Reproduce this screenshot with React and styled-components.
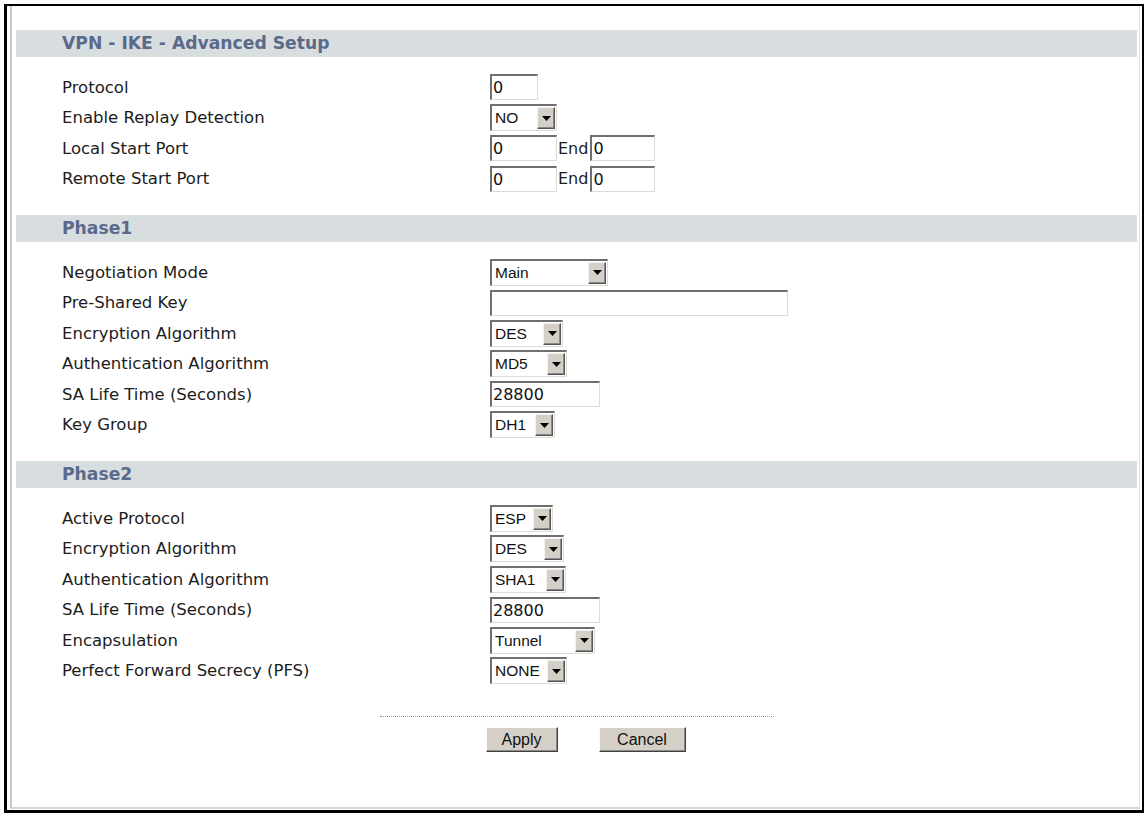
import React from "react";
import styled, { createGlobalStyle } from "styled-components";

const GlobalStyle = createGlobalStyle`
  html, body {
    margin: 0;
    padding: 0;
    background: #fff;
  }
  body {
    width: 1148px;
    height: 815px;
    overflow: hidden;
    font-family: "DejaVu Sans", Verdana, sans-serif;
  }
  * { box-sizing: border-box; }
`;

const Page = styled.div`
  width: 1148px;
  height: 815px;
  padding-top: 4px;
  display: flex;
  flex-direction: column;
`;

const Frame = styled.div`
  margin: 0 4px 0 4px;
  height: 809px;
  border-style: solid;
  border-color: #000;
  border-width: 2px 2px 3px 3px;
  display: flex;
  flex: none;
`;

const Inner = styled.div`
  flex: 1;
  margin: 0 2px 1px 3px;
  border-left: 2px solid #c9c9c9;
  border-bottom: 2px solid #d6d6d6;
  border-right: 1px solid #e2e2e2;
  padding: 24px 2px 0 4px;
  display: flex;
  flex-direction: column;
`;

const SectionHeader = styled.div`
  height: 27px;
  line-height: 27px;
  padding-left: 46px;
  background: #d8dde0;
  color: #5a6a8a;
  font-family: "DejaVu Sans", Verdana, sans-serif;
  font-weight: bold;
  font-size: 17.2px;
`;

const SectionBody = styled.div`
  padding: 15px 0 21px 46px;
`;

const Row = styled.div`
  display: grid;
  grid-template-columns: 428px 1fr;
  align-items: center;
  height: 30.5px;
`;

const Label = styled.span`
  font-family: "DejaVu Sans", Verdana, sans-serif;
  font-size: 16.5px;
  color: #1c1c1c;
  white-space: nowrap;
`;

const Controls = styled.div`
  display: flex;
  align-items: center;
`;

const Field = styled.input`
  width: ${(p) => p.$w}px;
  height: 26px;
  margin: 0;
  padding: 0 0 0 1px;
  border-style: solid;
  border-width: 2px 1px 1px 2px;
  border-color: #6f6f6f #dedbd4 #dedbd4 #6f6f6f;
  background: #fff;
  font-family: "DejaVu Sans", Verdana, sans-serif;
  font-size: 16px;
  color: #111;
  outline: none;
`;

const Joiner = styled.span`
  margin: 0 2px 0 1px;
  font-family: "DejaVu Sans", Verdana, sans-serif;
  font-size: 16px;
  color: #1c1c1c;
`;

const SelectBox = styled.div`
  width: ${(p) => p.$w}px;
  height: 27px;
  display: flex;
  align-items: stretch;
  border-style: solid;
  border-width: 2px 1px 1px 2px;
  border-color: #6f6f6f #dedbd4 #dedbd4 #6f6f6f;
  background: #fff;
  padding: 1px 1px 1px 0;
`;

const SelectValue = styled.span`
  flex: 1;
  padding-left: 3px;
  font-family: "Liberation Sans", Arial, sans-serif;
  font-size: 15.5px;
  line-height: 22px;
  color: #111;
  white-space: nowrap;
  overflow: hidden;
`;

const ArrowButton = styled.span`
  width: 18px;
  flex: none;
  display: flex;
  align-items: center;
  justify-content: center;
  background: #d4d0c8;
  border-style: solid;
  border-width: 1px;
  border-color: #f4f2ee #555 #555 #f4f2ee;
  box-shadow: inset -1px -1px 0 #8a8a8a;
`;

const Footer = styled.div`
  margin-top: 9px;
  display: flex;
  flex-direction: column;
  align-items: center;
`;

const DottedRule = styled.div`
  width: 394px;
  border-top: 1px dotted #9a9a9a;
`;

const ButtonRow = styled.div`
  margin-top: 10px;
  padding-left: 18px;
  display: flex;
  gap: 41px;
`;

const Button = styled.button`
  width: ${(p) => p.$w}px;
  height: 25px;
  margin: 0;
  padding: 0;
  background: #d4d0c8;
  border-style: solid;
  border-width: 1px;
  border-color: #fbfaf8 #404040 #404040 #fbfaf8;
  box-shadow: inset -1px -1px 0 #8a8a8a;
  font-family: "Liberation Sans", Arial, sans-serif;
  font-size: 16px;
  color: #111;
`;

const DownArrow = () => (
  <svg width="9" height="5" viewBox="0 0 9 5" aria-hidden="true">
    <path d="M0 0 H9 L4.5 5 Z" fill="#000" />
  </svg>
);

const Select = ({ w, value }) => (
  <SelectBox $w={w}>
    <SelectValue>{value}</SelectValue>
    <ArrowButton>
      <DownArrow />
    </ArrowButton>
  </SelectBox>
);

const renderControl = (c) => {
  if (c.type === "select") return <Select w={c.w} value={c.value} />;
  if (c.type === "range")
    return (
      <>
        <Field $w={c.w1} defaultValue="0" readOnly />
        <Joiner>End</Joiner>
        <Field $w={c.w2} defaultValue="0" readOnly />
      </>
    );
  return <Field $w={c.w} defaultValue={c.value} readOnly />;
};

const sections = [
  {
    title: "VPN - IKE - Advanced Setup",
    rows: [
      { label: "Protocol", control: { type: "input", w: 48, value: "0" } },
      { label: "Enable Replay Detection", control: { type: "select", w: 67, value: "NO" } },
      { label: "Local Start Port", control: { type: "range", w1: 67, w2: 65 } },
      { label: "Remote Start Port", control: { type: "range", w1: 67, w2: 65 } },
    ],
  },
  {
    title: "Phase1",
    rows: [
      { label: "Negotiation Mode", control: { type: "select", w: 118, value: "Main" } },
      { label: "Pre-Shared Key", control: { type: "input", w: 298, value: "" } },
      { label: "Encryption Algorithm", control: { type: "select", w: 73, value: "DES" } },
      { label: "Authentication Algorithm", control: { type: "select", w: 77, value: "MD5" } },
      { label: "SA Life Time (Seconds)", control: { type: "input", w: 110, value: "28800" } },
      { label: "Key Group", control: { type: "select", w: 65, value: "DH1" } },
    ],
  },
  {
    title: "Phase2",
    rows: [
      { label: "Active Protocol", control: { type: "select", w: 63, value: "ESP" } },
      { label: "Encryption Algorithm", control: { type: "select", w: 74, value: "DES" } },
      { label: "Authentication Algorithm", control: { type: "select", w: 76, value: "SHA1" } },
      { label: "SA Life Time (Seconds)", control: { type: "input", w: 110, value: "28800" } },
      { label: "Encapsulation", control: { type: "select", w: 105, value: "Tunnel" } },
      { label: "Perfect Forward Secrecy (PFS)", control: { type: "select", w: 77, value: "NONE" } },
    ],
  },
];

export default function App() {
  return (
    <>
      <GlobalStyle />
      <Page>
        <Frame>
          <Inner>
            {sections.map((s) => (
              <section key={s.title}>
                <SectionHeader>{s.title}</SectionHeader>
                <SectionBody>
                  {s.rows.map((r, i) => (
                    <Row key={i}>
                      <Label>{r.label}</Label>
                      <Controls>{renderControl(r.control)}</Controls>
                    </Row>
                  ))}
                </SectionBody>
              </section>
            ))}
            <Footer>
              <DottedRule />
              <ButtonRow>
                <Button $w={72}>Apply</Button>
                <Button $w={87}>Cancel</Button>
              </ButtonRow>
            </Footer>
          </Inner>
        </Frame>
      </Page>
    </>
  );
}
